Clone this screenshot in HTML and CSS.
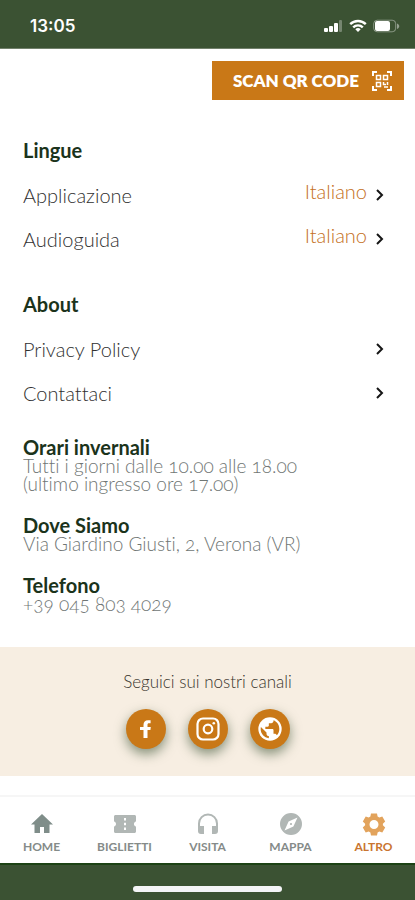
FILE: index.html
```html
<!DOCTYPE html>
<html lang="it">
<head>
<meta charset="utf-8">
<meta name="viewport" content="width=device-width, initial-scale=1">
<title>Altro</title>
<link rel="stylesheet" href="styles.css">
</head>
<body>
<header class="status">
  <time class="clock">13:05</time>
  <div class="indicators">
    <svg width="19" height="14" viewBox="0 0 19 14" fill="#fff"><rect x="0" y="9" width="4" height="4" rx="1"/><rect x="5" y="7" width="4" height="6" rx="1"/><rect x="10" y="4" width="4" height="9" rx="1"/><rect x="15" y="1" width="3" height="12" rx="1" opacity=".3"/></svg>
    <svg width="18" height="14" viewBox="0 0 18 14" fill="none" stroke="#fff" stroke-width="2.4"><path d="M1.2 5.2a11 11 0 0 1 15.6 0M4.2 8.4a6.8 6.8 0 0 1 9.6 0"/><path d="M9 13 6.3 10.3a3.8 3.8 0 0 1 5.4 0z" fill="#fff" stroke="none"/></svg>
    <svg width="27" height="14" viewBox="0 0 27 14"><rect x=".7" y="1.2" width="22" height="11.6" rx="3.5" fill="none" stroke="#fff" stroke-opacity=".4"/><rect x="2" y="2" width="15" height="10" rx="2" fill="#fff"/><path d="M24 4.500v5.500c3-1.200 3-4.300 0-5.500z" fill="#fff" opacity=".45"/></svg>
  </div>
</header>
<main>
  <div class="toolbar">
    <button class="scan" type="button">SCAN QR CODE
      <svg width="20" height="20" viewBox="0 0 20 20" fill="none" stroke="#fff" stroke-width="1.5"><path stroke-width="2" d="M1 5V1h4M15 1h4v4M19 15v4h-4M5 19H1v-4"/><path d="M4.500 4.500h4V8.500h-4zM11.500 4.500h4v4h-4zM4.500 11.500h4v4h-4zM11.500 11v2.500H14M15.500 11v3M12 16h4"/></svg>
    </button>
  </div>
  <section class="group">
    <h2>Lingue</h2>
    <a class="row" href="#app"><span>Applicazione</span><span class="value">Italiano</span><svg class="chevron" viewBox="0 0 10 14"><path d="m2 2 5 5-5 5"/></svg></a>
    <a class="row" href="#audio"><span>Audioguida</span><span class="value">Italiano</span><svg class="chevron" viewBox="0 0 10 14"><path d="m2 2 5 5-5 5"/></svg></a>
  </section>
  <section class="group">
    <h2>About</h2>
    <a class="row" href="#privacy"><span>Privacy Policy</span><svg class="chevron" viewBox="0 0 10 14"><path d="m2 2 5 5-5 5"/></svg></a>
    <a class="row" href="#contatti"><span>Contattaci</span><svg class="chevron" viewBox="0 0 10 14"><path d="m2 2 5 5-5 5"/></svg></a>
  </section>
  <section class="details">
    <div><h3>Orari invernali</h3><p>Tutti i giorni dalle 10.00 alle 18.00<br>(ultimo ingresso ore 17.00)</p></div>
    <div><h3>Dove Siamo</h3><p>Via Giardino Giusti, 2, Verona (VR)</p></div>
    <div><h3>Telefono</h3><p>+39 045 803 4029</p></div>
  </section>
  <section class="social">
    <p>Seguici sui nostri canali</p>
    <div class="channels">
      <a href="#facebook" aria-label="Facebook"><svg viewBox="0 0 24 24" width="24" height="24"><path fill="#fff" d="M9.500 21v-8H6v-3h3.500V8c0-3.200 1.600-4.800 4.600-4.800h2.500v3H15c-1.200 0-1.500.5-1.500 1.600V10h3.300l-.4 3h-2.900v8z"/></svg></a>
      <a href="#instagram" aria-label="Instagram"><svg viewBox="0 0 24 24" width="24" height="24" fill="none" stroke="#fff" stroke-width="2.200"><rect x="1.500" y="1.500" width="21" height="21" rx="5.500"/><circle cx="12" cy="12" r="4.300"/><circle cx="17.800" cy="6.300" r="1.300" fill="#fff" stroke="none"/></svg></a>
      <a href="#web" aria-label="Sito web"><svg viewBox="0 0 24 24" width="28" height="28"><circle cx="12" cy="12" r="10" fill="#fff"/><path fill="#c97817" d="M15 4.600c3 1.200 5 4 5 7.400 0 2.100-.8 4-2.100 5.400-.3-.8-1-1.400-1.900-1.400h-1v-3c0-.6-.4-1-1-1H8v-2h2c.6 0 1-.4 1-1V7h2c1.100 0 2-.9 2-2zM4.200 10.200 9 15v1c0 1.100.9 2 2 2v1.900c-3.900-.5-7-3.800-7-7.900 0-.6.100-1.200.2-1.800z"/></svg></a>
    </div>
  </section>
</main>
<nav class="tabs">
  <a href="#home"><svg class="dark" viewBox="0 0 24 24"><path d="M10 21v-6h4v6h5.500v-8.500H23L12 2 1 12.500h3.500V21z"/></svg>HOME</a>
  <a href="#biglietti"><svg viewBox="0 0 24 24"><path fill-rule="evenodd" d="M23 9.500v-5c0-.8-.7-1.500-1.500-1.500h-19C1.700 3 1 3.700 1 4.500v5c2.700.5 2.700 4.500 0 5v5c0 .8.700 1.500 1.500 1.500h19c.8 0 1.500-.7 1.500-1.500v-5c-2.700-.5-2.700-4.500 0-5zM11 6h2v2.500h-2zM11 10.800h2v2.400h-2zM11 15.500h2V18h-2z"/></svg>BIGLIETTI</a>
  <a href="#visita"><svg viewBox="0 0 24 24"><path d="M12 1.500a10 10 0 0 0-10 10V19a3 3 0 0 0 3 3h3v-8H4v-2.500a8 8 0 0 1 16 0V14h-4v8h3a3 3 0 0 0 3-3v-7.500a10 10 0 0 0-10-10z"/></svg>VISITA</a>
  <a href="#mappa"><svg viewBox="0 0 24 24"><path d="M12 10.900a1.100 1.100 0 1 0 0 2.200 1.100 1.100 0 0 0 0-2.200zM12 1a11 11 0 1 0 0 22 11 11 0 0 0 0-22zm2.400 13.400L5.500 18.500l4.100-8.900 8.900-4.100z"/></svg>MAPPA</a>
  <a class="active" href="#altro" aria-current="page"><svg viewBox="0 0 24 24"><path fill-rule="evenodd" d="M9 1.500h6l.6 3.100 1.700 1 3-1 2.900 5-2.300 2.100v1.600l2.300 2.100-2.900 5-3-1-1.700 1-.6 3.100H9l-.6-3.100-1.700-1-3 1-2.900-5 2.300-2.100v-1.600L.8 9.600l2.900-5 3 1 1.700-1zM12 8a4.500 4.500 0 1 0 0 9 4.500 4.500 0 0 0 0-9z"/></svg>ALTRO</a>
</nav>
<footer class="system"><div class="indicator"></div></footer>
</body>
</html>
```
FILE: styles.css
```css
* { box-sizing: border-box; }
body {
  margin: 0;
  min-height: 100vh;
  display: flex;
  flex-direction: column;
  background: #fff;
  color: #303030;
  font-family: Lato, sans-serif;
  font-variant-numeric: oldstyle-nums;
  font-variant-ligatures: none;
}
h2, h3, p { margin: 0; }
a { color: inherit; text-decoration: none; }
svg { flex: none; }
main { flex: 1; }

.status {
  height: 49px;
  padding: 4px 15px 0 30px;
  display: flex;
  align-items: center;
  justify-content: space-between;
  background: #3b5233;
  border-bottom: 1px solid #71806b;
  color: #fff;
}
.clock { font: 600 17px/20px Inter, sans-serif; }
.indicators { display: flex; align-items: center; gap: 6px; }

.toolbar { display: flex; justify-content: flex-end; padding: 12px 11px 0; }
.scan {
  display: flex;
  align-items: center;
  gap: 13px;
  height: 39px;
  padding: 0 12px 0 21px;
  border: 0;
  background: #c97817;
  color: #fff;
  font: 800 17px/20px Lato, sans-serif;
}

.group { padding: 0 30px 0 23px; margin-bottom: 31px; }
.toolbar + .group { margin-top: 38px; }
h2 { font-size: 20px; line-height: 24px; font-weight: 700; color: #1b331b; margin-bottom: 11px; }
.row { display: flex; align-items: center; height: 44px; font-size: 20px; line-height: 24px; font-weight: 300; }
.value { margin-left: auto; margin-right: 8px; padding-bottom: 8px; color: #c46f1c; }
.chevron { width: 10px; height: 14px; fill: none; stroke: #161616; stroke-width: 2; }
.row > .chevron { margin-left: auto; }
.row > .value + .chevron { margin-left: 0; }

.details { display: flex; flex-direction: column; gap: 22px; padding: 0 23px; margin-top: -9px; }
h3 { font-size: 20px; line-height: 20px; font-weight: 700; color: #1b331b; }
.details p { font-size: 19px; line-height: 18px; font-weight: 300; color: #707674; }

.social {
  margin-top: 34px;
  padding: 24px 0 27px;
  background: #f7eee2;
  text-align: center;
}
.social p { font-size: 17px; line-height: 22px; font-weight: 300; color: #38342c; }
.channels { display: flex; justify-content: center; gap: 22px; margin-top: 16px; }
.channels a {
  display: flex;
  align-items: center;
  justify-content: center;
  width: 40px;
  height: 40px;
  border-radius: 50%;
  background: #c97817;
  box-shadow: 0 5px 12px rgb(59 82 51 / 60%);
}

.tabs {
  display: grid;
  grid-template-columns: repeat(5, 1fr);
  height: 68px;
  padding-top: 15px;
  border-top: 2px solid #f6f6f6;
  font-size: 12px;
  line-height: 16px;
  font-weight: 700;
  color: #858b89;
}
.tabs a { display: flex; flex-direction: column; align-items: center; gap: 3px; }
.tabs svg { width: 24px; height: 24px; fill: #b1b7b5; }
.tabs .dark { fill: #7f8d89; }
.tabs .active { color: #c97530; }
.tabs .active svg { fill: #e2a35c; }

.system { height: 37px; display: flex; justify-content: center; padding-top: 21px; background: #3b5233; border-top: 2px solid #1d4215; }
.indicator { width: 36%; height: 6px; border-radius: 3px; background: #f4f5f7; }
```
